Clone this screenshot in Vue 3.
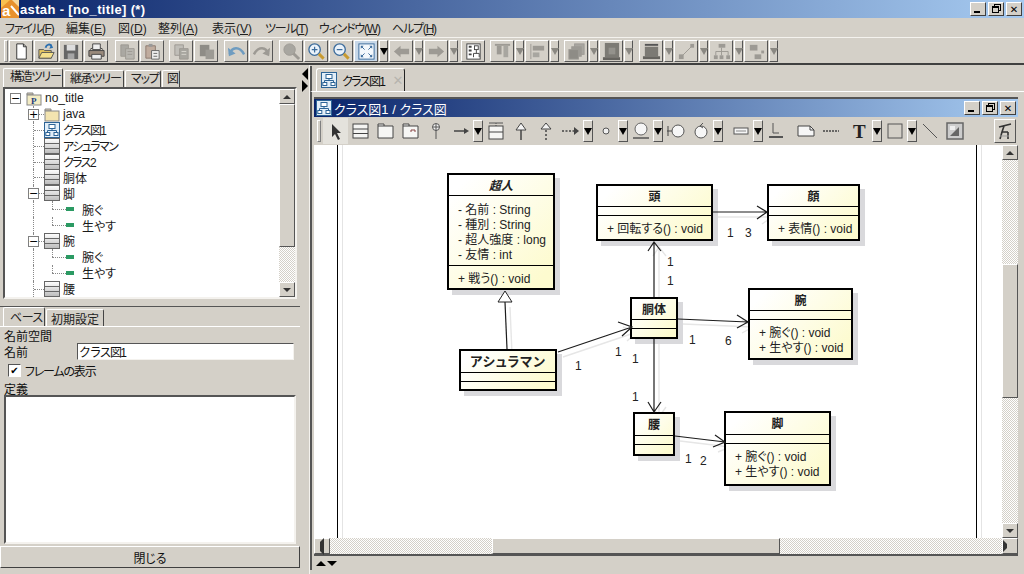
<template>
  <div class="app">
    <header class="titlebar">
      <svg class="logo" viewBox="0 0 18 18">
        <rect width="18" height="18" fill="#e8912c" />
        <path d="M0 0h9L0 8z" fill="#f8c050" />
        <path d="M11 0l7 7V0z" fill="#f6d9a0" />
        <text x="1" y="16" font-size="15" font-weight="700" fill="#fff" font-family="Liberation Sans">a</text>
        <path d="M10 6l8 9" stroke="#fff" stroke-width="2" />
      </svg>
      <span class="title-text">astah - [no_title] (*)</span>
      <span class="win-btns">
        <button class="win-btn"><i class="min"></i></button>
        <button class="win-btn"><i class="restore"></i></button>
        <button class="win-btn close">✕</button>
      </span>
    </header>

    <nav class="menubar">
      <span
        v-for="m in menus"
        :key="m.label"
        class="menu-item"
        :class="{ 'kana-menu': hasKana(m.label) }"
        :style="{ width: m.width + 'px' }"
      >{{ m.label }}(<u>{{ m.key }}</u>)</span>
    </nav>

    <div class="toolbar">
      <span class="grip"></span>
      <template v-for="(b, i) in mainTools" :key="i">
        <span v-if="b[0] === '|'" class="tool-gap" :style="{ width: b.slice(1) + 'px' }"></span>
        <span v-else-if="b === 'v' || b === 'v0'" class="tool-arrow" :class="{ on: b === 'v0' }"><i></i></span>
        <span v-else class="tool-btn" :class="{ flat: b === 'fit' }">
          <svg viewBox="0 0 20 20" v-html="icons[b]"></svg>
        </span>
      </template>
    </div>

    <div class="main">
      <aside class="left">
        <div class="tabs">
          <span class="tab active kana-tab t1">構造ツリー</span>
          <span class="tab kana-tab t2">継承ツリー</span>
          <span class="tab kana-tab t3">マップ</span>
          <span class="tab t4">図</span>
        </div>
        <div class="tree-box">
          <ul class="tree">
            <li v-for="n in treeRows" :key="n.id" class="tree-row" :class="'lv' + n.level">
              <span class="guide" :class="{ last: n.level === 2 }"></span>
              <span v-if="n.toggle" class="toggle">{{ n.toggle }}</span>
              <svg v-if="n.icon === 'op'" class="op-icon" viewBox="0 0 8 4"><rect width="8" height="4" fill="#2b9a63" /></svg>
              <svg v-else class="tree-icon" viewBox="0 0 16 16" v-html="icons[n.icon]"></svg>
              <span class="tree-label" :class="{ kana: hasKana(n.label) }">{{ n.label }}</span>
            </li>
          </ul>
          <div class="vscroll">
            <span class="sbtn"><i class="up"></i></span>
            <span class="thumb tree-thumb"></span>
            <span class="track"></span>
            <span class="sbtn"><i class="down"></i></span>
          </div>
        </div>

        <div class="divider"></div>

        <div class="tabs props-tabs">
          <span class="tab active base-tab">ベース</span>
          <span class="tab">初期設定</span>
        </div>
        <div class="props">
          <div class="prop-line">名前空間</div>
          <div class="prop-name">
            <span>名前</span>
            <input class="name-input kana" value="クラス図1" />
          </div>
          <label class="check-line">
            <span class="check">✔</span>
            <span class="kana-check">フレームの表示</span>
          </label>
          <div class="prop-line">定義</div>
          <div class="definition"></div>
        </div>
        <button class="close-btn">閉じる</button>
      </aside>

      <div class="splitter">
        <i class="tri-left"></i>
        <i class="tri-right"></i>
      </div>

      <section class="right">
        <div class="doc-tabs">
          <span class="doc-tab">
            <svg viewBox="0 0 16 16" v-html="icons.diagram"></svg>
            <span class="kana">クラス図1</span>
            <b>✕</b>
          </span>
        </div>
        <div class="doc-body">
          <div class="inner-window">
            <div class="inner-title">
              <svg viewBox="0 0 16 16" v-html="icons.diagram"></svg>
              <span>クラス図1 / クラス図</span>
              <span class="win-btns">
                <button class="win-btn"><i class="min"></i></button>
                <button class="win-btn"><i class="restore"></i></button>
                <button class="win-btn close">✕</button>
              </span>
            </div>
            <div class="diagram-tools">
              <span class="grip"></span>
              <template v-for="(b, i) in diagramTools" :key="i">
                <span v-if="b === 'v'" class="tool-arrow dark"><i></i></span>
                <span v-else-if="b[0] === '|'" class="tool-gap" :style="{ width: b.slice(1) + 'px' }"></span>
                <span v-else class="d-tool" :class="{ selected: b === 'pointer', pinned: b === 'pinned' }">
                  <svg viewBox="0 0 20 20" v-html="icons[b]"></svg>
                </span>
              </template>
            </div>
            <div class="canvas-row">
              <div class="canvas">
                <span class="frame-line left-line"></span>
                <span class="frame-line right-line"></span>
                <svg class="edges" viewBox="0 0 688 394">
                  <g fill="none" stroke="#e6e6e6" stroke-width="1.4">
                    <path v-for="(e, i) in edges" :key="i" :d="e" transform="translate(5 5)" />
                  </g>
                </svg>
                <div
                  v-for="c in classes"
                  :key="c.name"
                  class="uml"
                  :style="{ left: c.x + 'px', top: c.y + 'px', width: c.w + 'px', height: c.h + 'px' }"
                >
                  <div class="uml-name" :class="{ abstract: c.abstract, tall: c.tall, wide: c.wide }">{{ c.name }}</div>
                  <div class="uml-attrs">
                    <div v-for="a in c.attrs" :key="a">{{ a }}</div>
                  </div>
                  <div class="uml-ops">
                    <div v-for="o in c.ops" :key="o">{{ o }}</div>
                  </div>
                </div>
                <svg class="edges" viewBox="0 0 688 394">
                  <g fill="none" stroke="#1c1c1c" stroke-width="1.2">
                    <path v-for="(e, i) in edges" :key="i" :d="e" />
                  </g>
                  <path d="M191 146l-7 11h14z" fill="#fff" stroke="#222" />
                </svg>
                <span
                  v-for="(m, i) in mults"
                  :key="i"
                  class="mult"
                  :style="{ left: m.x + 'px', top: m.y + 'px' }"
                >{{ m.t }}</span>
              </div>
              <div class="vscroll canvas-v">
                <span class="sbtn"><i class="up"></i></span>
                <span class="track before-thumb"></span>
                <span class="thumb canvas-thumb"></span>
                <span class="track"></span>
                <span class="sbtn"><i class="down"></i></span>
              </div>
            </div>
            <div class="hscroll">
              <span class="sbtn"><i class="left"></i></span>
              <span class="track before-hthumb"></span>
              <span class="hthumb"></span>
              <span class="track"></span>
              <span class="sbtn"><i class="right"></i></span>
            </div>
          </div>
          <div class="bottom-strip">
            <i class="tri-up"></i>
            <i class="tri-down"></i>
          </div>
        </div>
      </section>
    </div>
  </div>
</template>

<script setup>
const menus = [
  { label: 'ファイル', key: 'F', width: 61 },
  { label: '編集', key: 'E', width: 52 },
  { label: '図', key: 'D', width: 40 },
  { label: '整列', key: 'A', width: 54 },
  { label: '表示', key: 'V', width: 53 },
  { label: 'ツール', key: 'T', width: 54 },
  { label: 'ウィンドウ', key: 'W', width: 73 },
  { label: 'ヘルプ', key: 'H', width: 60 }
]

// the original UI font has much narrower katakana
function hasKana(text) {
  return /[ァ-ヶー]/.test(text)
}

const gray = '#9d9a94'
const icons = {
  page: '<path d="M5 2h7l3 3v13H5z" fill="#fff" stroke="#333"/><path d="M12 2v3h3" fill="none" stroke="#333"/>',
  open: '<path d="M2 8h5l1 1h7v8H2z" fill="#e8c860" stroke="#555"/><path d="M2 17l3-6h13l-3 6z" fill="#f4e08c" stroke="#555"/><path d="M9 6c1-4 5-4 6-2" fill="none" stroke="#2b6fb0" stroke-width="2"/><path d="M13 7l4-1-2-4z" fill="#2b6fb0"/>',
  save: '<rect x="2" y="3" width="15" height="15" fill="#666"/><rect x="5" y="3" width="9" height="6" fill="#ddd"/><rect x="6" y="12" width="7" height="6" fill="#a5a5a5"/>',
  print: '<path d="M6 2h8v6H6z" fill="#eee" stroke="#444"/><path d="M2 9h16v6H2z" fill="#9a8a7c" stroke="#444"/><path d="M5 13h10v5H5z" fill="#eee" stroke="#444"/><path d="M3 8l3-2M17 8l-3-2" stroke="#444"/>',
  copy: `<path d="M3 3h8v12H3z" fill="#aaa8a2" stroke="${gray}"/><path d="M8 7h9v11H8z" fill="#b8b6b0" stroke="${gray}"/><path d="M10 10h5M10 13h5" stroke="${gray}"/>`,
  paste: `<path d="M3 4h10v13H3z" fill="#c0ac9e" stroke="#8c7a70"/><path d="M6 2h4v3H6z" fill="#999"/><path d="M9 9h8v9H9z" fill="#efefef" stroke="#666"/><path d="M11 12h4M11 15h4" stroke="#666"/>`,
  copy2: `<path d="M3 3h9v11H3z" fill="#c0beb8" stroke="${gray}"/><path d="M8 7h9v11H8z" fill="#a8a6a0" stroke="${gray}"/><path d="M10 10h5M10 13h5" stroke="#d6d4ce"/>`,
  copy3: `<path d="M3 3h10v12H3z" fill="#8e8c86"/><path d="M9 8h9v10H9z" fill="#9c9a94"/>`,
  undo: '<path d="M3 13C5 5 13 4 18 13" fill="none" stroke="#6f9cc0" stroke-width="2.6"/><path d="M1 6l1 9 7-3z" fill="#6f9cc0"/>',
  redo: `<path d="M17 13C15 5 7 4 2 13" fill="none" stroke="${gray}" stroke-width="2.6"/><path d="M19 6l-1 9-7-3z" fill="${gray}"/>`,
  find: `<circle cx="8" cy="8" r="6" fill="#a8a6a0" stroke="${gray}"/><path d="M12 12l6 6" stroke="${gray}" stroke-width="3"/>`,
  zoomin: '<circle cx="8" cy="8" r="6" fill="#eaf2fa" stroke="#3c6c9c" stroke-width="1.4"/><path d="M5 8h6M8 5v6" stroke="#3c6c9c" stroke-width="1.3"/><path d="M12.500 12.500l5 5" stroke="#c89a30" stroke-width="3"/>',
  zoomout: '<circle cx="8" cy="8" r="6" fill="#eaf2fa" stroke="#3c6c9c" stroke-width="1.4"/><path d="M5 8h6" stroke="#3c6c9c" stroke-width="1.3"/><path d="M12.500 12.500l5 5" stroke="#c89a30" stroke-width="3"/>',
  fit: '<rect x="2" y="2" width="16" height="16" fill="#f4f8fc" stroke="#3c6c9c"/><path d="M4 4h3L4 7zM16 4h-3l3 3zM4 16h3l-3-3zM16 16h-3l3-3z" fill="#3c6c9c"/><path d="M8 8l-3-3M12 8l3-3M8 12l-3 3M12 12l3 3" stroke="#3c6c9c"/>',
  back: `<path d="M2 10l7-6v3h9v6H9v3z" fill="${gray}"/>`,
  forward: `<path d="M18 10l-7-6v3H2v6h9v3z" fill="${gray}"/>`,
  layout: '<rect x="3" y="2" width="14" height="16" fill="#fff" stroke="#444"/><path d="M5 5h3M5 9h3M5 13h3" stroke="#444" stroke-width="2"/><rect x="11" y="4" width="4" height="4" fill="#fff" stroke="#444"/><path d="M10 16v-4h6v4M13 8v4" fill="none" stroke="#444"/>',
  alignt: `<path d="M2 3h16" stroke="${gray}" stroke-width="2"/><rect x="4" y="4" width="5" height="9" fill="${gray}"/><rect x="11" y="4" width="5" height="12" fill="#a8a6a0"/>`,
  alignl: `<path d="M3 2v16" stroke="${gray}"/><rect x="5" y="4" width="12" height="5" fill="${gray}"/><rect x="5" y="11" width="7" height="5" fill="#a8a6a0"/>`,
  front: `<rect x="8" y="2" width="10" height="11" fill="#a8a6a0" stroke="${gray}"/><rect x="5" y="5" width="10" height="10" fill="#9c9a94" stroke="${gray}"/><rect x="2" y="8" width="10" height="10" fill="#8e8c86" stroke="${gray}"/>`,
  solid: '<rect x="3" y="1" width="15" height="15" fill="#7c7a74"/><rect x="7" y="6" width="7" height="7" fill="#94928c"/><rect x="1" y="16" width="18" height="3" fill="#66645f"/>',
  panel: '<rect x="3" y="2" width="14" height="2" fill="#555"/><rect x="3" y="5" width="14" height="10" fill="#7c7a74"/><rect x="1" y="15" width="18" height="3" fill="#66645f"/>',
  line: `<rect x="2" y="13" width="5" height="5" fill="${gray}"/><rect x="14" y="2" width="4" height="4" fill="${gray}"/><path d="M5 15L16 4" stroke="${gray}"/>`,
  tree: `<rect x="7" y="2" width="7" height="4" fill="${gray}"/><path d="M10 6v4M4 10h13M4 10v4M10 10v4M17 10v4" stroke="${gray}" fill="none"/><rect x="2" y="14" width="4" height="4" fill="${gray}"/><rect x="8" y="14" width="4" height="4" fill="${gray}"/><rect x="15" y="14" width="4" height="4" fill="${gray}"/>`,
  spread: `<rect x="3" y="3" width="8" height="6" fill="${gray}"/><rect x="8" y="13" width="7" height="5" fill="${gray}"/><rect x="15" y="9" width="3" height="3" fill="${gray}"/>`,
  pkg: '<path d="M1 3h6v2H1z" fill="#d8ccb0" stroke="#888"/><rect x="1" y="5" width="14" height="10" fill="#f3e4b0" stroke="#888"/>',
  project: '<path d="M1 3h6v2H1z" fill="#d8ccb0" stroke="#888"/><rect x="1" y="5" width="14" height="10" fill="#f3ecc4" stroke="#888"/><text x="5" y="14" font-size="9" font-weight="700" font-family="Liberation Serif" fill="#1d3d80">P</text>',
  diagram: '<rect x="0.500" y="0.500" width="15" height="15" fill="#e2eef8" stroke="#2d6496"/><rect x="5" y="2.500" width="6" height="4" fill="#fff" stroke="#2d6496"/><path d="M8 6.500v2M3.500 8.500h9v2M3.500 8.500v2" fill="none" stroke="#2d6496"/><rect x="1.800" y="10.500" width="4" height="3" fill="#fff" stroke="#2d6496"/><rect x="10" y="10.500" width="4" height="3" fill="#fff" stroke="#2d6496"/>',
  cls: '<defs><linearGradient id="cg" x1="0" y1="0" x2="0" y2="1"><stop offset="0" stop-color="#fff"/><stop offset="1" stop-color="#bbb"/></linearGradient></defs><rect x="0.500" y="0.500" width="15" height="15" fill="url(#cg)" stroke="#666"/><path d="M1 5.500h14M1 10.500h14" stroke="#666"/>',
  pointer: '<path d="M6 3v13l3-3 3 6 2-1-3-6h4z" fill="#333"/>',
  dclass: '<rect x="2" y="3" width="15" height="14" fill="#f4f4f2" stroke="#444"/><path d="M2 8h15M2 12.500h15" stroke="#444"/>',
  dpkg: '<path d="M2 5V3h6v2M2 5h15v12H2z" fill="#f6f6f4" stroke="#444"/>',
  dsub: '<path d="M2 5V3h6v2M2 5h15v12H2z" fill="#f6f6f4" stroke="#444"/><path d="M10 11V9h4v2" fill="none" stroke="#844"/>',
  pin: '<circle cx="10" cy="6" r="3.500" fill="#f3f3f3" stroke="#555"/><path d="M10 3v6M7 6h6M10 9v9" stroke="#555"/>',
  assoc: '<path d="M3 10h12" stroke="#444" stroke-width="1.500"/><path d="M13 7l5 3-5 3z" fill="#444"/>',
  assocclass: '<path d="M3 2h14" stroke="#555"/><path d="M10 2v3" stroke="#555" stroke-dasharray="1 1"/><rect x="3" y="5" width="14" height="13" fill="#f6f6f4" stroke="#444"/><path d="M3 11h14" stroke="#444"/>',
  gen: '<path d="M10 2l5 7H5z" fill="#f3f3f3" stroke="#444"/><path d="M10 9v10" stroke="#444" stroke-width="1.500"/>',
  genDash: '<path d="M10 2l5 6H5z" fill="#f3f3f3" stroke="#444"/><path d="M10 9v10" stroke="#444" stroke-width="1.500" stroke-dasharray="2 2"/>',
  depend: '<path d="M1 10h12" stroke="#444" stroke-width="1.500" stroke-dasharray="2 1.500"/><path d="M13 6l5 4-5 4z" fill="#444"/>',
  iface: '<circle cx="10" cy="10" r="3" fill="#f0f0f0" stroke="#555"/>',
  usecase: '<circle cx="10" cy="8" r="6" fill="#f6f6f6" stroke="#666"/><path d="M2 17h16" stroke="#555" stroke-width="1.500"/>',
  bound: '<path d="M1 10h6" stroke="#444"/><path d="M2 5v10" stroke="#444"/><circle cx="12" cy="10" r="6" fill="#f6f6f6" stroke="#555"/>',
  ctrl: '<circle cx="10" cy="11" r="6" fill="#f6f6f6" stroke="#555"/><path d="M9 5l3-3M9 5l3 2" stroke="#555"/>',
  slot: '<rect x="3" y="7" width="14" height="6" fill="#f6f6f6" stroke="#555"/><path d="M5 10h10" stroke="#888"/>',
  anchor: '<path d="M7 2v10h6" fill="none" stroke="#555"/><path d="M3 16h14" stroke="#555" stroke-width="2"/>',
  note: '<path d="M2 5h12l4 4v6H2z" fill="#f6f6f6" stroke="#444"/><path d="M14 5v4h4" fill="none" stroke="#444"/>',
  dots: '<path d="M2 10h16" stroke="#444" stroke-width="1.500" stroke-dasharray="2 1"/>',
  text: '<text x="3" y="17" font-size="19" font-weight="700" font-family="Liberation Serif" fill="#222">T</text>',
  rect: '<rect x="3" y="3" width="14" height="14" fill="none" stroke="#555"/>',
  stroke: '<path d="M3 3l14 14" stroke="#555"/>',
  image: '<rect x="2" y="2" width="16" height="16" fill="#ccc" stroke="#666" stroke-width="1.500"/><path d="M5 15l9-9v9z" fill="#666"/><rect x="5" y="5" width="5" height="4" fill="#eee"/>',
  pinned: '<path d="M4 6l12-3M9 5l-2 6h6M7 11l-2 7M13 11v7" fill="none" stroke="#333" stroke-width="1.600"/><path d="M5 15h9" stroke="#999"/>'
}

const mainTools = [
  'page', 'open', 'save', 'print', '|6',
  'copy', 'paste', '|4',
  'copy2', 'copy3', '|5',
  'undo', 'redo', '|5',
  'find', 'zoomin', 'zoomout', 'fit', 'v0', 'back', 'v', 'forward', 'v', '|2',
  'layout', '|4',
  'alignt', 'v', 'alignl', 'v', '|4',
  'front', 'v', 'solid', 'v', '|5',
  'panel', 'v', 'line', 'v', 'tree', 'v', 'spread', 'v'
]

const diagramTools = [
  'pointer', 'dclass', 'dpkg', 'dsub', 'pin', 'assoc', 'v', 'assocclass', 'gen', 'genDash', 'depend', 'v',
  'iface', 'v', 'usecase', 'v', 'bound', 'ctrl', 'v', '|5', 'slot', '|0', 'v', 'anchor', '|5', 'note', 'dots', '|4',
  'text', 'v', 'rect', 'v', 'stroke', 'image', 'pinned'
]

const treeRows = [
  { id: 1, level: 0, toggle: '−', icon: 'project', label: 'no_title' },
  { id: 2, level: 1, toggle: '+', icon: 'pkg', label: 'java' },
  { id: 3, level: 1, icon: 'diagram', label: 'クラス図1' },
  { id: 4, level: 1, icon: 'cls', label: 'アシュラマン' },
  { id: 5, level: 1, icon: 'cls', label: 'クラス2' },
  { id: 6, level: 1, icon: 'cls', label: '胴体' },
  { id: 7, level: 1, toggle: '−', icon: 'cls', label: '脚' },
  { id: 8, level: 2, icon: 'op', label: '腕ぐ' },
  { id: 9, level: 2, icon: 'op', label: '生やす' },
  { id: 10, level: 1, toggle: '−', icon: 'cls', label: '腕' },
  { id: 11, level: 2, icon: 'op', label: '腕ぐ' },
  { id: 12, level: 2, icon: 'op', label: '生やす' },
  { id: 13, level: 1, icon: 'cls', label: '腰' }
]

// canvas origin is at page (314, 146)
const classes = [
  { name: '超人', x: 133, y: 28, w: 108, h: 117, abstract: true, attrs: ['- 名前 : String', '- 種別 : String', '- 超人強度 : long', '- 友情 : int'], ops: ['+ 戦う() : void'] },
  { name: '頭', x: 282, y: 39, w: 117, h: 57, attrs: [], ops: ['+ 回転する() : void'] },
  { name: '顔', x: 453, y: 39, w: 93, h: 57, attrs: [], ops: ['+ 表情() : void'] },
  { name: '胴体', x: 316, y: 152, w: 48, h: 42, attrs: [], ops: [] },
  { name: '腕', x: 434, y: 143, w: 105, h: 72, attrs: [], ops: ['+ 腕ぐ() : void', '+ 生やす() : void'] },
  { name: 'アシュラマン', x: 145, y: 204, w: 98, h: 42, wide: true, tall: true, attrs: [], ops: [] },
  { name: '腰', x: 319, y: 267, w: 42, h: 44, tall: true, attrs: [], ops: [] },
  { name: '脚', x: 410, y: 266, w: 107, h: 75, tall: true, attrs: [], ops: ['+ 腕ぐ() : void', '+ 生やす() : void'] }
]

const edges = [
  'M193 204L191 157',
  'M244 207L318 182M304 177L318 182L308 191',
  'M340 152V97M334 106L340 97L347 106',
  'M399 67H453M443 61L453 67L443 74',
  'M364 174L434 177M423 170L434 177L423 183',
  'M340 194V267M334 257L340 267L347 257',
  'M361 291L411 297M401 290L411 297L399 302'
]

const mults = [
  { t: '1', x: 261, y: 214 },
  { t: '1', x: 301, y: 200 },
  { t: '1', x: 318, y: 207 },
  { t: '1', x: 318, y: 245 },
  { t: '1', x: 353, y: 110 },
  { t: '1', x: 353, y: 129 },
  { t: '1', x: 375, y: 188 },
  { t: '6', x: 411, y: 189 },
  { t: '1', x: 413, y: 81 },
  { t: '3', x: 431, y: 81 },
  { t: '1', x: 371, y: 307 },
  { t: '2', x: 386, y: 309 }
]
</script>

<style>
html,
body {
  margin: 0;
  background: #d4d0c8;
}
</style>

<style scoped>
.app {
  width: 1024px;
  height: 574px;
  overflow: hidden;
  display: flex;
  flex-direction: column;
  background: #d4d0c8;
  font-family: "Liberation Sans", "Noto Sans CJK JP", sans-serif;
  font-size: 12px;
  font-feature-settings: "palt";
  color: #111;
}
.kana {
  letter-spacing: -1.6px;
}

.titlebar {
  height: 18px;
  flex: none;
  display: flex;
  align-items: center;
  background: linear-gradient(90deg, #0a246a, #a6caf0);
  color: #fff;
}
.logo {
  width: 18px;
  height: 18px;
  margin-left: 1px;
  flex: none;
}
.title-text {
  margin-left: 1px;
  font-weight: 700;
  font-size: 13px;
  letter-spacing: 0.35px;
}
.win-btns {
  margin-left: auto;
  display: flex;
  padding-right: 2px;
}
.win-btn {
  width: 16px;
  height: 14px;
  margin-left: 1px;
  padding: 0;
  background: #d4d0c8;
  border: 1px solid;
  border-color: #fff #404040 #404040 #fff;
  font-size: 10px;
  font-weight: 700;
  line-height: 11px;
  color: #000;
  position: relative;
  font-family: "DejaVu Sans", sans-serif;
}
.win-btn + .win-btn {
  margin-left: 2px;
}
.win-btn .min {
  position: absolute;
  left: 3px;
  bottom: 2px;
  width: 6px;
  height: 2px;
  background: #000;
}
.win-btn .restore {
  position: absolute;
  left: 3px;
  top: 3px;
  width: 5px;
  height: 4px;
  border: 1px solid #000;
  border-top-width: 2px;
  background: #d4d0c8;
  box-shadow: 2px -2px 0 -1px #d4d0c8, 2px -2px 0 0 #000;
}

.menubar {
  height: 20px;
  flex: none;
  display: flex;
  align-items: center;
  padding-left: 5px;
  border-bottom: 1px solid #f4f2ee;
  box-sizing: border-box;
}
.menu-item {
  flex: none;
  white-space: nowrap;
  color: #222;
}
.kana-menu {
  letter-spacing: -1.2px;
}

.toolbar {
  height: 27px;
  flex: none;
  display: flex;
  align-items: center;
  box-sizing: border-box;
  padding: 1px 0 0 4px;
  border-bottom: 2px solid #404040;
}
.grip {
  width: 2px;
  height: 20px;
  flex: none;
  border: 1px solid;
  border-color: #fff #808080 #808080 #fff;
  margin-right: 1px;
}
.tool-btn {
  width: 22px;
  height: 20px;
  flex: none;
  margin-right: 1px;
  display: flex;
  align-items: center;
  justify-content: center;
  border: 1px solid;
  border-color: #fff #555 #555 #fff;
}
.tool-btn svg {
  width: 19px;
  height: 19px;
}
.tool-btn.flat {
  background: #c8d8e8;
}
.tool-gap {
  flex: none;
}
.tool-arrow {
  width: 7px;
  height: 20px;
  flex: none;
  margin-right: 1px;
  display: flex;
  align-items: center;
  justify-content: center;
  border: 1px solid;
  border-color: #fff #555 #555 #fff;
}
.tool-arrow i {
  width: 0;
  height: 0;
  border: 4px solid transparent;
  border-bottom: 0;
  border-top: 7px solid #8a8882;
}
.tool-arrow.on i,
.tool-arrow.dark i {
  border-top-color: #000;
}

.main {
  flex: 1;
  min-height: 0;
  display: flex;
}

.left {
  width: 300px;
  flex: none;
  display: flex;
  flex-direction: column;
  padding: 3px 0 6px 0;
  box-sizing: border-box;
}
.tabs {
  height: 19px;
  flex: none;
  display: flex;
  align-items: flex-end;
  padding-left: 3px;
}
.tab {
  height: 17px;
  line-height: 17px;
  padding: 0 4px;
  margin-right: 1px;
  border-top: 1px solid #fff;
  border-left: 1px solid #fff;
  border-right: 1px solid #444;
  border-radius: 2px 2px 0 0;
  color: #222;
  white-space: nowrap;
  box-sizing: border-box;
}
.tab.active {
  height: 19px;
}
.kana-tab {
  letter-spacing: -1.2px;
}
.t1 {
  width: 60px;
  padding-left: 6px;
}
.t2 {
  width: 60px;
  padding-left: 5px;
}
.t3 {
  width: 36px;
  padding-left: 5px;
}
.t4 {
  width: 18px;
  padding-left: 4px;
  overflow: hidden;
}
.tree-box {
  height: 212px;
  flex: none;
  margin: 0 3px;
  display: flex;
  background: #fff;
  border: 2px solid;
  border-color: #555 #f4f2ee #f4f2ee #555;
  box-sizing: border-box;
  overflow: hidden;
}
.tree {
  flex: 1;
  list-style: none;
  margin: 0;
  padding: 1px 0 0;
  min-width: 0;
}
.tree-row {
  height: 15.9px;
  display: flex;
  align-items: center;
  position: relative;
  white-space: nowrap;
}
.tree-row.lv0 {
  padding-left: 21px;
}
.tree-row.lv1 {
  padding-left: 39px;
}
.tree-row.lv2 {
  padding-left: 61px;
}
.guide {
  position: absolute;
  top: 0;
  bottom: 0;
  left: 28px;
  border-left: 1px dotted #888;
}
.tree-row.lv0 .guide {
  display: none;
}
.guide::after {
  content: "";
  position: absolute;
  top: 8px;
  left: 0;
  width: 10px;
  border-top: 1px dotted #888;
}
.guide.last::before {
  content: "";
  position: absolute;
  left: 18px;
  top: 0;
  height: 8px;
  border-left: 1px dotted #888;
}
.guide.last::after {
  left: 18px;
  width: 14px;
}
.toggle {
  position: absolute;
  width: 9px;
  height: 9px;
  top: 3px;
  border: 1px solid #808080;
  background: #fff;
  font: 11px/9px "DejaVu Sans", sans-serif;
  text-align: center;
  color: #000;
}
.lv0 .toggle {
  left: 5px;
}
.lv1 .toggle {
  left: 23px;
}
.tree-icon {
  width: 16px;
  height: 16px;
  flex: none;
  position: relative;
}
.op-icon {
  width: 8px;
  height: 4px;
  flex: none;
  position: relative;
  margin-right: 8px;
}
.tree-label {
  margin-left: 3px;
  color: #1a1a1a;
}
.lv2 .tree-label {
  margin-left: 0;
}

.vscroll {
  width: 16px;
  flex: none;
  display: flex;
  flex-direction: column;
}
.sbtn {
  height: 15px;
  flex: none;
  display: flex;
  align-items: center;
  justify-content: center;
  background: #d4d0c8;
  border: 1px solid;
  border-color: #fff #555 #555 #fff;
  box-sizing: border-box;
}
.sbtn i {
  width: 0;
  height: 0;
  border: 4px solid transparent;
}
.sbtn i.up {
  border-top: 0;
  border-bottom: 4px solid #333;
}
.sbtn i.down {
  border-bottom: 0;
  border-top: 4px solid #333;
}
.sbtn i.left {
  border-left: 0;
  border-right: 4px solid #333;
}
.sbtn i.right {
  border-right: 0;
  border-left: 4px solid #333;
}
.thumb {
  flex: none;
  box-sizing: border-box;
  background: #d4d0c8;
  border: 1px solid;
  border-color: #fff #555 #555 #fff;
}
.tree-thumb {
  height: 143px;
}
.canvas-thumb {
  height: 134px;
}
.track {
  flex: 1;
  background: repeating-conic-gradient(#fff 0 25%, #d4d0c8 0 50%) 0 0 / 2px 2px;
}
.before-thumb {
  flex: none;
  height: 104px;
}
.before-hthumb {
  flex: none;
  width: 162px;
}

.divider {
  height: 7px;
  flex: none;
  border-bottom: 1px solid #555;
}
.props-tabs .tab {
  line-height: 21px;
}
.base-tab {
  width: 42px;
  padding-left: 6px;
  letter-spacing: -0.5px;
}
.props {
  flex: 1;
  min-height: 0;
  display: flex;
  flex-direction: column;
  padding: 0 4px 0 4px;
  border-top: 1px solid #fff;
}
.prop-line {
  height: 15px;
  line-height: 21px;
  flex: none;
}
.prop-name {
  height: 19px;
  flex: none;
  display: flex;
  align-items: center;
}
.prop-name span {
  width: 73px;
  flex: none;
}
.name-input {
  flex: 1;
  min-width: 0;
  height: 17px;
  margin-right: 2px;
  padding: 0 0 0 1px;
  box-sizing: border-box;
  border: 1px solid;
  border-color: #555 #f4f2ee #f4f2ee #555;
  font-family: inherit;
  font-size: 12px;
  background: #fff;
  color: #111;
}
.check-line {
  height: 19px;
  flex: none;
  display: flex;
  align-items: center;
  gap: 4px;
  padding-left: 4px;
}
.kana-check {
  letter-spacing: -1.2px;
}
.check {
  width: 11px;
  height: 11px;
  border: 1px solid;
  border-color: #555 #fff #fff #555;
  background: #fff;
  font: 10px/11px "DejaVu Sans", sans-serif;
  text-align: center;
  color: #000;
}
.definition {
  flex: 1;
  min-height: 0;
  background: #fff;
  border: 2px solid;
  border-color: #555 #f4f2ee #f4f2ee #555;
  margin-bottom: 2px;
}
.close-btn {
  height: 22px;
  flex: none;
  padding: 0;
  background: #d4d0c8;
  border: 1px solid;
  border-color: #fff #404040 #404040 #fff;
  font: inherit;
  color: #111;
}

.splitter {
  width: 10px;
  flex: none;
  display: flex;
  flex-direction: column;
  align-items: center;
  padding-top: 3px;
  box-sizing: border-box;
  border-right: 1px solid #f4f2ee;
}
.tri-left,
.tri-right {
  width: 0;
  height: 0;
  border: 6px solid transparent;
}
.tri-left {
  border-left: 0;
  border-right: 6px solid #000;
}
.tri-right {
  border-right: 0;
  border-left: 6px solid #000;
}

.right {
  flex: 1;
  min-width: 0;
  display: flex;
  flex-direction: column;
  padding-bottom: 4px;
}
.doc-tabs {
  height: 25px;
  flex: none;
  margin-top: 1px;
  display: flex;
  align-items: flex-end;
  padding-left: 4px;
  border-left: 2px solid #555;
  box-sizing: border-box;
}
.doc-tab {
  height: 23px;
  width: 89px;
  display: flex;
  align-items: center;
  gap: 5px;
  padding-left: 4px;
  box-sizing: border-box;
  border-top: 1px solid #fff;
  border-left: 1px solid #fff;
  border-right: 1px solid #222;
  border-radius: 3px 3px 0 0;
  white-space: nowrap;
}
.doc-tab svg {
  width: 16px;
  height: 16px;
  flex: none;
}
.doc-tab b {
  color: #b6b4ae;
  font: 700 13px "DejaVu Sans", sans-serif;
  margin-left: 3px;
}
.doc-body {
  flex: 1;
  min-height: 0;
  display: flex;
  flex-direction: column;
  border-left: 2px solid #555;
  border-top: 1px solid #fff;
  padding: 5px 0 0 2px;
}
.inner-window {
  flex: 1;
  min-height: 0;
  margin-right: 6px;
  display: flex;
  flex-direction: column;
  border-top: 2px solid #555;
  border-bottom: 2px solid #555;
}
.inner-title {
  height: 18px;
  flex: none;
  display: flex;
  align-items: center;
  gap: 2px;
  color: #fff;
  font-size: 13px;
  background: linear-gradient(90deg, #0a246a, #a6caf0);
}
.inner-title svg {
  width: 16px;
  height: 16px;
  margin-left: 2px;
  flex: none;
}
.diagram-tools {
  height: 28px;
  flex: none;
  display: flex;
  align-items: center;
  padding-left: 3px;
}
.diagram-tools .grip {
  margin-right: 2px;
}
.d-tool {
  width: 25px;
  height: 26px;
  flex: none;
  display: flex;
  align-items: center;
  justify-content: center;
}
.d-tool svg {
  width: 20px;
  height: 20px;
}
.d-tool.selected {
  background: #e4e2dc;
}
.d-tool.pinned {
  margin-left: auto;
  margin-right: 2px;
  width: 20px;
  height: 22px;
  border: 1px solid;
  border-color: #fff #555 #555 #fff;
}
.tool-arrow.dark {
  width: 8px;
  height: 20px;
  margin: 0;
}
.canvas-row {
  flex: 1;
  min-height: 0;
  display: flex;
}
.canvas {
  flex: 1;
  position: relative;
  background: #fff;
  overflow: hidden;
}
.frame-line {
  position: absolute;
  top: 0;
  bottom: 0;
  width: 1px;
  background: #000;
  box-shadow: 5px 0 0 #e4e4e4;
}
.left-line {
  left: 23px;
}
.right-line {
  left: 662px;
}
.edges {
  position: absolute;
  left: 0;
  top: 0;
  width: 688px;
  height: 394px;
}
.hscroll {
  height: 16px;
  flex: none;
  display: flex;
}
.hscroll .sbtn {
  width: 16px;
  height: 16px;
}
.hthumb {
  width: 288px;
  flex: none;
  background: #d4d0c8;
  border: 1px solid;
  border-color: #fff #555 #555 #fff;
  box-sizing: border-box;
}
.bottom-strip {
  height: 14px;
  flex: none;
  display: flex;
  align-items: center;
  gap: 1px;
  padding-left: 2px;
}
.tri-up,
.tri-down {
  width: 0;
  height: 0;
  border: 5px solid transparent;
  border-top: 0;
  border-bottom: 5px solid #000;
}
.tri-down {
  border-bottom: 0;
  border-top: 5px solid #000;
}

.uml {
  position: absolute;
  box-sizing: border-box;
  display: flex;
  flex-direction: column;
  border: 2px solid #000;
  background: linear-gradient(135deg, #ffffff 10%, #fdfbcf 90%);
  box-shadow: 5px 5px 0 #d9d9dc;
  color: #222;
  line-height: 15px;
}
.uml-name {
  height: 21px;
  flex: none;
  box-sizing: border-box;
  line-height: 22px;
  text-align: center;
  font-weight: 700;
  border-bottom: 1px solid #000;
}
.uml-name.abstract {
  font-style: italic;
}
.uml-name.tall {
  height: 22px;
}
.uml-name.wide {
  font-size: 13px;
  letter-spacing: 0.8px;
}
.uml-attrs {
  flex: none;
  min-height: 9px;
  padding-left: 9px;
  border-bottom: 1px solid #000;
  box-sizing: border-box;
}
.uml-attrs:not(:empty) {
  padding-top: 7px;
  padding-bottom: 2px;
}
.uml-ops {
  flex: 1;
  padding: 6px 0 0 9px;
  white-space: nowrap;
}
.uml-ops:empty {
  padding: 0;
}
.mult {
  position: absolute;
  line-height: 14px;
  color: #222;
}
</style>
